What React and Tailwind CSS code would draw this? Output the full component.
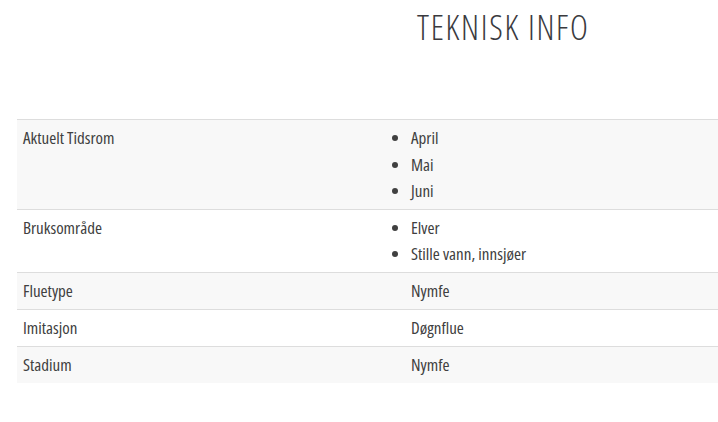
const rows = [
  { label: "Aktuelt Tidsrom", items: ["April", "Mai", "Juni"] },
  { label: "Bruksområde", items: ["Elver", "Stille vann, innsjøer"] },
  { label: "Fluetype", value: "Nymfe" },
  { label: "Imitasjon", value: "Døgnflue" },
  { label: "Stadium", value: "Nymfe" },
];

export default function App() {
  return (
    <div className="min-h-screen bg-white font-['Open_Sans',sans-serif] font-stretch-condensed text-[#404040]">
      {/* Heading */}
      <h2 className="pl-[417px] pt-[7px] text-[34px] leading-[41px] font-light tracking-[1.7px] text-[#3a3a3e]">
        TEKNISK INFO
      </h2>

      {/* Info table */}
      <div className="mt-[71px] ml-[17px] w-[701px] text-[17px] leading-[26.5px] font-[385]">
        {rows.map((row, i) => (
          <div
            key={row.label}
            className={`flex min-h-[37px] border-t border-[#dddddd] ${i % 2 === 0 ? "bg-[#f8f8f8]" : "bg-white"}`}
          >
            <div className="w-[388px] shrink-0 pl-[6px] pt-[5px] pb-[4px]">{row.label}</div>
            <div className="flex-1 pl-[6px] pt-[5px] pb-[4px]">
              {row.items ? (
                <ul className="list-disc list-outside pl-0">
                  {row.items.map((item) => (
                    <li key={item}>{item}</li>
                  ))}
                </ul>
              ) : (
                row.value
              )}
            </div>
          </div>
        ))}
      </div>
    </div>
  );
}
